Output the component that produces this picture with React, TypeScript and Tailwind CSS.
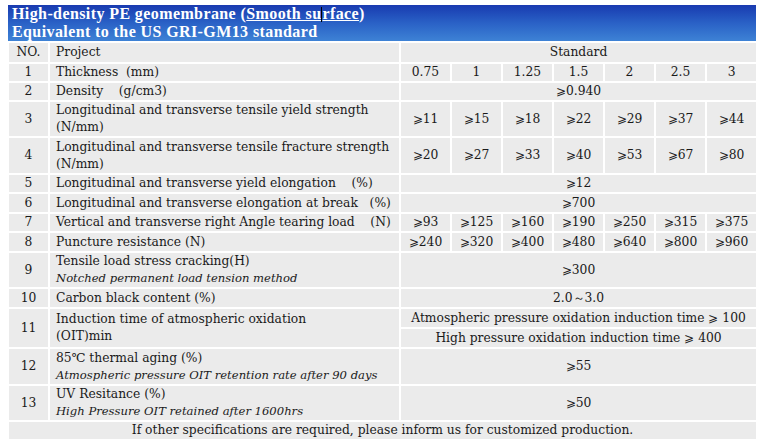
const sizes = ["0.75", "1", "1.25", "1.5", "2", "2.5", "3"];

type Row = {
  no: string;
  label: string;
  note?: string;
  values?: string[];
  single?: string;
  h: string;
};

const rows: Row[] = [
  { no: "2", label: "Density    (g/cm3)", single: "⩾0.940", h: "h-[19px]" },
  {
    no: "3",
    label: "Longitudinal and transverse tensile yield strength\n(N/mm)",
    values: ["⩾11", "⩾15", "⩾18", "⩾22", "⩾29", "⩾37", "⩾44"],
    h: "h-[36px]",
  },
  {
    no: "4",
    label: "Longitudinal and transverse tensile fracture strength\n(N/mm)",
    values: ["⩾20", "⩾27", "⩾33", "⩾40", "⩾53", "⩾67", "⩾80"],
    h: "h-[37px]",
  },
  { no: "5", label: "Longitudinal and transverse yield elongation    (%)", single: "⩾12", h: "h-[19px]" },
  { no: "6", label: "Longitudinal and transverse elongation at break   (%)", single: "⩾700", h: "h-[20px]" },
  {
    no: "7",
    label: "Vertical and transverse right Angle tearing load    (N)",
    values: ["⩾93", "⩾125", "⩾160", "⩾190", "⩾250", "⩾315", "⩾375"],
    h: "h-[19px]",
  },
  {
    no: "8",
    label: "Puncture resistance (N)",
    values: ["⩾240", "⩾320", "⩾400", "⩾480", "⩾640", "⩾800", "⩾960"],
    h: "h-[20px]",
  },
  {
    no: "9",
    label: "Tensile load stress cracking(H)",
    note: "Notched permanent load tension method",
    single: "⩾300",
    h: "h-[36px]",
  },
  { no: "10", label: "Carbon black content (%)", single: "2.0～3.0", h: "h-[20px]" },
];

const tail: Row[] = [
  {
    no: "12",
    label: "85℃ thermal aging (%)",
    note: "Atmospheric pressure OIT retention rate after 90 days",
    single: "⩾55",
    h: "h-[37px]",
  },
  {
    no: "13",
    label: "UV Resitance (%)",
    note: "High Pressure OIT retained after 1600hrs",
    single: "⩾50",
    h: "h-[36px]",
  },
];

const cell = "bg-[#ebebeb] border-2 border-white p-0";

function DataRow({ r }: { r: Row }) {
  return (
    <tr className={r.h}>
      <td className={`${cell} text-center`}>{r.no}</td>
      <td className={`${cell} pl-[6px] whitespace-pre leading-[17px]`}>
        {r.label}
        {r.note && (
          <>
            {"\n"}
            <span className="italic text-[11.6px]">{r.note}</span>
          </>
        )}
      </td>
      {r.values ? (
        r.values.map((v) => (
          <td key={v} className={`${cell} text-center`}>
            {v}
          </td>
        ))
      ) : (
        <td colSpan={7} className={`${cell} text-center`}>
          {r.single}
        </td>
      )}
    </tr>
  );
}

export default function App() {
  return (
    <div className="w-[765px] h-[442px] bg-white pt-[5px] pl-[7px] font-['DejaVu_Serif',serif] text-[12.3px] text-[#1a1a1a]">
      <div className="w-[750px]">
        {/* Title bar */}
        <div className="h-[37px] mx-px bg-gradient-to-b from-[#1a3ab0] via-[#2a61c6] to-[#3e82d5] border-b border-[#1d3c9c] pl-[4px] text-white font-bold font-['Liberation_Serif',serif] text-[16px] leading-[18px] tracking-[0.4px]">
          <div>
            High-density PE geomembrane (
            <span className="underline">
              Smooth su
              <span className="inline-block w-px h-[15px] bg-black align-[-3px]" />
              rface
            </span>
            )
          </div>
          <div>Equivalent to the US GRI-GM13 standard</div>
        </div>

        <table className="w-full border-collapse table-fixed -mt-px">
          <colgroup>
            <col className="w-[41px]" />
            <col className="w-[351px]" />
            {sizes.map((s) => (
              <col key={s} className="w-[51px]" />
            ))}
          </colgroup>
          <tbody className="leading-[17px]">
            <tr className="h-[21px]">
              <td className={`${cell} text-center`}>NO.</td>
              <td className={`${cell} pl-[6px]`}>Project</td>
              <td colSpan={7} className={`${cell} text-center`}>
                Standard
              </td>
            </tr>
            <tr className="h-[19px]">
              <td className={`${cell} text-center`}>1</td>
              <td className={`${cell} pl-[6px] whitespace-pre`}>Thickness  (mm)</td>
              {sizes.map((s) => (
                <td key={s} className={`${cell} text-center`}>
                  {s}
                </td>
              ))}
            </tr>
            {rows.map((r) => (
              <DataRow key={r.no} r={r} />
            ))}
            <tr className="h-[20px]">
              <td rowSpan={2} className={`${cell} text-center`}>
                11
              </td>
              <td rowSpan={2} className={`${cell} pl-[6px] whitespace-pre`}>
                {"Induction time of atmospheric oxidation\n(OIT)min"}
              </td>
              <td colSpan={7} className={`${cell} text-center`}>
                Atmospheric pressure oxidation induction time ⩾ 100
              </td>
            </tr>
            <tr className="h-[20px]">
              <td colSpan={7} className={`${cell} text-center`}>
                High pressure oxidation induction time ⩾ 400
              </td>
            </tr>
            {tail.map((r) => (
              <DataRow key={r.no} r={r} />
            ))}
            <tr className="h-[19px]">
              <td colSpan={9} className={`${cell} text-center`}>
                If other specifications are required, please inform us for customized production.
              </td>
            </tr>
          </tbody>
        </table>
      </div>
    </div>
  );
}
